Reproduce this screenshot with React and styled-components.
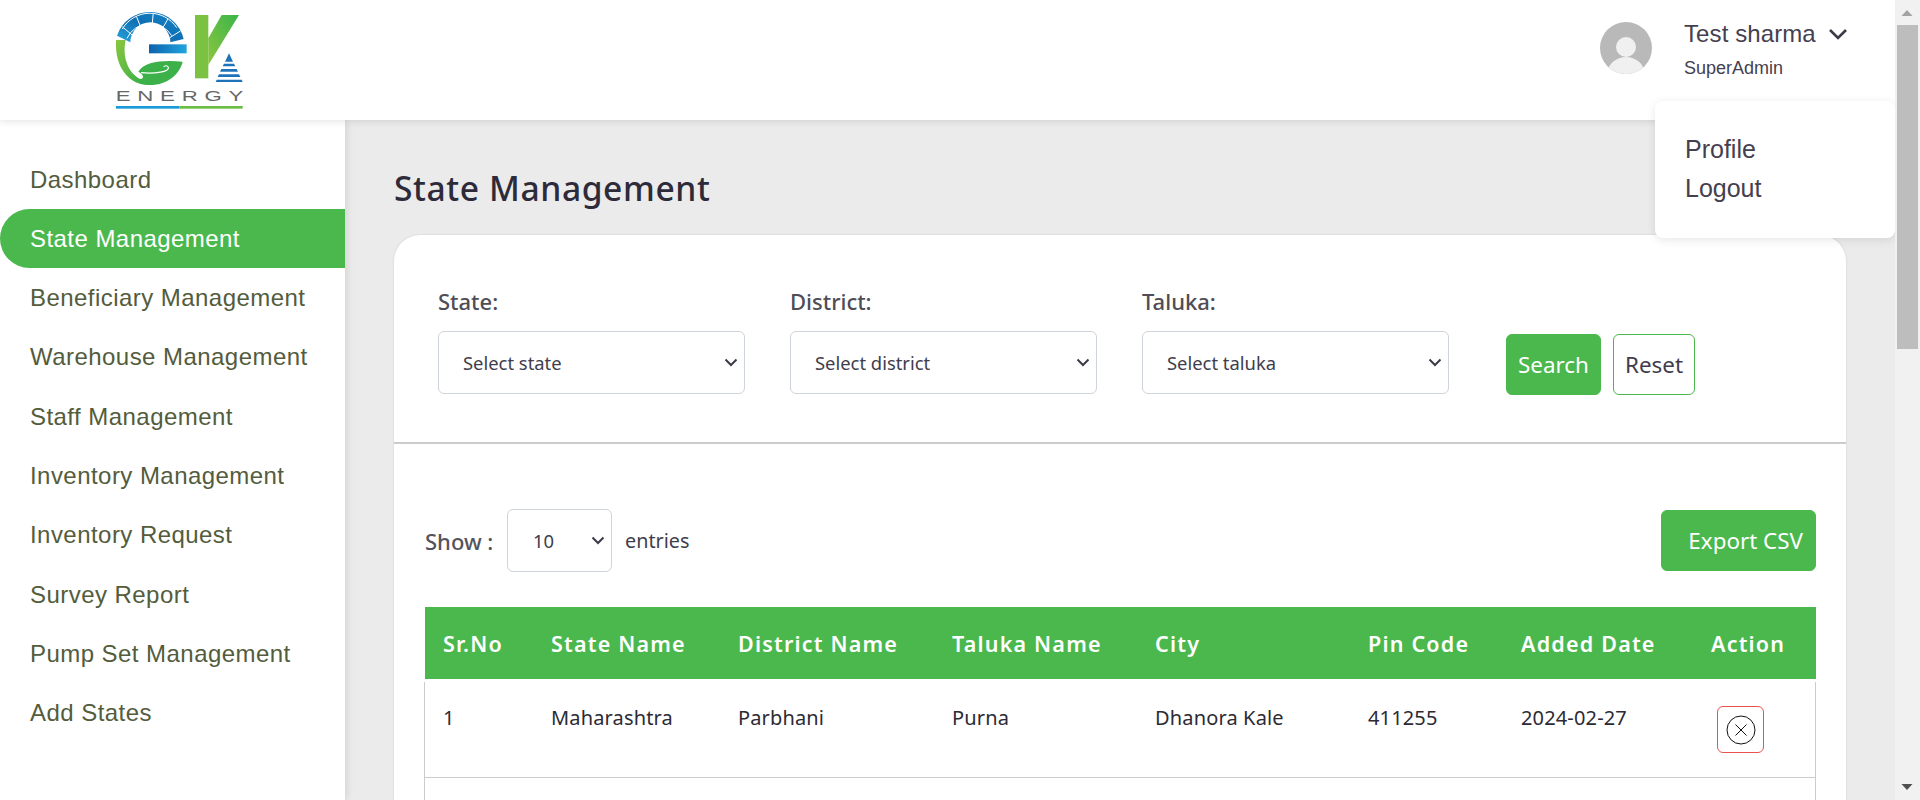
import React from 'react';
import styled, { createGlobalStyle } from 'styled-components';

const GREEN = '#4ab84c';
const chevron = encodeURIComponent(
  '<svg xmlns="http://www.w3.org/2000/svg" width="14" height="9" viewBox="0 0 14 9"><path d="M1.5 1.500 7 7l5.500-5.500" fill="none" stroke="#3c3a46" stroke-width="2"/></svg>'
);

const GlobalStyle = createGlobalStyle`
  html, body {
    height: 100%;
    overflow: hidden;
  }
  body {
    margin: 0;
    background: #ebebeb;
    font-family: "Noto Sans", "Open Sans", sans-serif;
  }
  * {
    box-sizing: border-box;
  }
`;

const Page = styled.div`
  display: flex;
  height: 100vh;
`;

const Content = styled.div`
  flex: 1;
  min-width: 0;
  height: 100vh;
  overflow: hidden;
`;

const ScrollRail = styled.div`
  flex: 0 0 25px;
  display: flex;
  flex-direction: column;
  align-items: center;
  background: #f1f1f1;
`;

const ScrollArrow = styled.svg`
  flex: 0 0 25px;
  width: 25px;
  height: 25px;
`;

const ScrollThumb = styled.div`
  width: 21px;
  height: 324px;
  margin-bottom: auto;
  background: #bdbdbd;
`;

const Header = styled.header`
  position: relative;
  z-index: 3;
  height: 120px;
  display: flex;
  justify-content: space-between;
  background: #fff;
  box-shadow: 0 1px 8px rgba(0, 0, 0, 0.12);
`;

const LogoBox = styled.div`
  padding: 5px 0 0 105px;
`;

const UserBox = styled.div`
  position: relative;
  display: flex;
  align-items: flex-start;
  padding: 22px 0 0 0;
  width: 295px;
`;

const Avatar = styled.svg`
  width: 52px;
  height: 52px;
  margin-right: 32px;
`;

const NameRow = styled.div`
  display: flex;
  align-items: center;
  gap: 12px;
  height: 22px;
  margin-top: 1px;
  font-family: "Liberation Sans", Arial, sans-serif;
  font-size: 24px;
  letter-spacing: 0.1px;
  color: #45404f;
`;

const Role = styled.div`
  margin-top: 13px;
  font-family: "Liberation Sans", Arial, sans-serif;
  font-size: 18px;
  color: #45404f;
`;

const Menu = styled.div`
  position: absolute;
  top: 101px;
  right: 0;
  width: 240px;
  height: 137px;
  padding: 29px 30px 0;
  background: #fff;
  border-radius: 8px;
  box-shadow: 0 2px 10px rgba(0, 0, 0, 0.1);
`;

const MenuItem = styled.div`
  height: 39px;
  line-height: 39px;
  font-family: "Liberation Sans", Arial, sans-serif;
  font-size: 25px;
  color: #45404f;
`;

const Layout = styled.div`
  display: flex;
  height: 680px;
`;

const Sidebar = styled.nav`
  flex: 0 0 345px;
  padding-top: 29.5px;
  background: #fff;
  box-shadow: 1px 0 8px rgba(0, 0, 0, 0.12);
  position: relative;
  z-index: 2;
`;

const NavItem = styled.div`
  height: 59.3px;
  line-height: 59.3px;
  padding-left: 30px;
  font-family: "Liberation Sans", Arial, sans-serif;
  font-size: 24px;
  letter-spacing: 0.45px;
  color: ${(p) => (p.$active ? '#fff' : '#535c3c')};
  background: ${(p) => (p.$active ? GREEN : 'transparent')};
  border-radius: 30px 0 0 30px;
`;

const Main = styled.main`
  flex: 1;
  min-width: 0;
  padding: 0 49px;
`;

const Title = styled.h1`
  margin: 0;
  height: 115px;
  padding-top: 46px;
  font-size: 33.6px;
  line-height: 44px;
  font-weight: 500;
  letter-spacing: 0.6px;
  color: #2d2a3a;
`;

const Card = styled.section`
  background: #fff;
  border-radius: 26px 26px 0 0;
  box-shadow: 0 0 2px rgba(0, 0, 0, 0.15);
`;

const Filters = styled.div`
  display: flex;
  align-items: flex-start;
  height: 209px;
  padding: 52px 44px 0;
  border-bottom: 2px solid #ccc;
`;

const Field = styled.label`
  display: block;
  width: 307px;
  margin-right: 45px;
`;

const FieldLabel = styled.div`
  height: 44px;
  font-size: 22px;
  line-height: 28px;
  font-weight: 500;
  color: #4f4d55;
`;

const Select = styled.select`
  display: block;
  width: ${(p) => p.$width || '100%'};
  height: 63px;
  padding: 0 0 0 ${(p) => p.$pad || '24px'};
  font-family: inherit;
  font-size: 18.4px;
  color: #413d4c;
  background: #fff url("data:image/svg+xml,${chevron}") no-repeat right 6px center;
  border: 1px solid #ced4da;
  border-radius: 6px;
  appearance: none;
`;

const Buttons = styled.div`
  display: flex;
  gap: 12px;
  margin: 47px 0 0 12px;
`;

const Button = styled.button`
  height: 61px;
  padding: 0;
  width: ${(p) => p.$width};
  font-family: inherit;
  font-size: 22.4px;
  color: ${(p) => (p.$outline ? '#413d4c' : '#fff')};
  background: ${(p) => (p.$outline ? '#fff' : GREEN)};
  border: 1px solid ${GREEN};
  border-radius: 6px;
`;

const ExportButton = styled(Button)`
  text-align: right;
  padding-right: 12px;
`;

const TableArea = styled.div`
  padding: 65px 30px 0 31px;
`;

const Toolbar = styled.div`
  display: flex;
  justify-content: space-between;
  align-items: center;
  margin-bottom: 35px;
`;

const ShowGroup = styled.div`
  display: flex;
  align-items: center;
  font-size: 19.8px;
  color: #413d4c;
`;

const ShowLabel = styled.span`
  width: 82px;
  font-size: 22px;
  font-weight: 500;
  color: #55535a;
`;

const Entries = styled.span`
  margin-left: 13px;
`;

const TableHead = styled.div`
  display: grid;
  grid-template-columns: 108px 187px 214px 203px 213px 153px 190px 1fr;
  height: 72px;
  align-items: center;
  background: ${GREEN};
`;

const HeadCell = styled.div`
  padding-left: 18px;
  font-size: 21.5px;
  font-weight: 600;
  letter-spacing: 1.2px;
  color: #fff;
  white-space: nowrap;
`;

const TableBody = styled.div`
  margin: 3px 0 0 -1px;
  min-height: 200px;
  border-left: 1px solid #ccc;
  border-right: 1px solid #ccc;
`;

const Row = styled.div`
  display: grid;
  grid-template-columns: 108px 187px 214px 203px 213px 153px 190px 1fr;
  height: 96px;
  border-bottom: 1px solid #ccc;
`;

const Cell = styled.div`
  padding: 21px 0 0 18px;
  font-size: 20px;
  letter-spacing: 0.15px;
  line-height: 30px;
  color: #2c2a35;
  white-space: nowrap;
`;

const ActionCell = styled.div`
  padding: 24px 0 0 24px;
`;

const IconButton = styled.button`
  display: flex;
  align-items: center;
  justify-content: center;
  width: 47px;
  height: 47px;
  padding: 0;
  background: #fff;
  border: 1px solid #e8524f;
  border-radius: 6px;
`;

const navItems = [
  'Dashboard',
  'State Management',
  'Beneficiary Management',
  'Warehouse Management',
  'Staff Management',
  'Inventory Management',
  'Inventory Request',
  'Survey Report',
  'Pump Set Management',
  'Add States',
];

const columns = ['Sr.No', 'State Name', 'District Name', 'Taluka Name', 'City', 'Pin Code', 'Added Date', 'Action'];
const row = ['1', 'Maharashtra', 'Parbhani', 'Purna', 'Dhanora Kale', '411255', '2024-02-27'];

// point on the solar arc, centred on the G
const polar = (r, deg) => {
  const a = (deg * Math.PI) / 180;
  return [135 + r * Math.cos(a), 135 - r * Math.sin(a)];
};

const Logo = () => {
  const spokes = [168, 140, 112, 85, 60, 32];
  return (
    <svg width="145" height="110" viewBox="0 0 435 330">
      <defs>
        <linearGradient id="arc" x1="0" y1="1" x2="1" y2="0">
          <stop offset="0" stopColor="#27a4dc" />
          <stop offset="0.5" stopColor="#0f6fb4" />
          <stop offset="1" stopColor="#1689c9" />
        </linearGradient>
        <linearGradient id="bar" x1="0" y1="0" x2="1" y2="0">
          <stop offset="0" stopColor="#0d62ad" />
          <stop offset="1" stopColor="#21a5de" />
        </linearGradient>
        <linearGradient id="arm" x1="0" y1="1" x2="1" y2="0">
          <stop offset="0" stopColor="#8cc63f" />
          <stop offset="1" stopColor="#39b54a" />
        </linearGradient>
        <linearGradient id="gee" x1="0" y1="0" x2="1" y2="1">
          <stop offset="0" stopColor="#8cc63f" />
          <stop offset="1" stopColor="#2fae4a" />
        </linearGradient>
      </defs>
      <path d="M36 92A104 104 0 0 1 236 102L196 112A60 60 0 0 0 76 112Z" fill="url(#arc)" />
      <path d="M52 72A96 96 0 0 1 215 68M66 100A76 76 0 0 1 200 92" fill="none" stroke="#fff" strokeWidth="3" />
      {spokes.map((d) => {
        const [x1, y1] = polar(60, d);
        const [x2, y2] = polar(108, d);
        return <line key={d} x1={x1} y1={y1} x2={x2} y2={y2} stroke="#fff" strokeWidth="3" />;
      })}
      <path d="M33 105H62C52 150 65 200 105 222L130 240C75 240 28 190 33 105Z" fill="url(#gee)" />
      <path d="M100 200C120 170 170 165 233 170C225 205 190 240 135 240C118 240 100 232 105 222C120 222 115 207 100 200Z" fill="#3cb14a" />
      <path d="M108 203C150 207 195 200 190 187C187 180 178 182 176 186" fill="none" stroke="#fff" strokeWidth="3.500" />
      <rect x="132" y="118" width="113" height="27" fill="url(#bar)" />
      <rect x="270" y="30" width="40" height="190" fill="#7cc242" />
      <path d="M310 100 350 30H402L310 180Z" fill="url(#arm)" />
      <path d="M372 145 384 170H360Z" fill="#1f72b8" />
      <path d="M357 176H387L391 184H353Z" fill="#1f72b8" />
      <path d="M349 192H395L399 200H345Z" fill="#1f72b8" />
      <path d="M342 208H402L406 216H338Z" fill="#1f72b8" />
      <path d="M335 224H410L413 231H332Z" fill="#1f72b8" />
      <text transform="translate(32 288) scale(1.45 1)" fontFamily="Liberation Sans, sans-serif" fontSize="46" letterSpacing="14" fill="#666">ENERGY</text>
      <rect x="33" y="303" width="190" height="8" fill="#1a9ad6" />
      <rect x="223" y="303" width="190" height="8" fill="#6cbb45" />
    </svg>
  );
};

const App = () => (
  <Page>
    <GlobalStyle />
    <Content>
      <Header>
        <LogoBox>
          <Logo />
        </LogoBox>
        <UserBox>
          <Avatar viewBox="0 0 52 52">
            <clipPath id="avatar-clip">
              <circle cx="26" cy="26" r="26" />
            </clipPath>
            <g clipPath="url(#avatar-clip)">
              <rect width="52" height="52" fill="#b9b9b9" />
              <circle cx="26" cy="25" r="10" fill="#f0f0f0" />
              <ellipse cx="26" cy="50" rx="18" ry="15" fill="#f0f0f0" />
            </g>
          </Avatar>
          <div>
            <NameRow>
              Test sharma
              <svg width="20" height="12" viewBox="0 0 20 12">
                <path d="M2 2l8 8 8-8" fill="none" stroke="#3c3a46" strokeWidth="2.600" />
              </svg>
            </NameRow>
            <Role>SuperAdmin</Role>
          </div>
          <Menu>
            <MenuItem>Profile</MenuItem>
            <MenuItem>Logout</MenuItem>
          </Menu>
        </UserBox>
      </Header>
      <Layout>
        <Sidebar>
          {navItems.map((item) => (
            <NavItem key={item} $active={item === 'State Management'}>{item}</NavItem>
          ))}
        </Sidebar>
        <Main>
          <Title>State Management</Title>
          <Card>
            <Filters>
              <Field>
                <FieldLabel>State:</FieldLabel>
                <Select><option>Select state</option></Select>
              </Field>
              <Field>
                <FieldLabel>District:</FieldLabel>
                <Select><option>Select district</option></Select>
              </Field>
              <Field>
                <FieldLabel>Taluka:</FieldLabel>
                <Select><option>Select taluka</option></Select>
              </Field>
              <Buttons>
                <Button $width="95px">Search</Button>
                <Button $width="82px" $outline>Reset</Button>
              </Buttons>
            </Filters>
            <TableArea>
              <Toolbar>
                <ShowGroup>
                  <ShowLabel>Show :</ShowLabel>
                  <Select $width="105px" $pad="25px"><option>10</option></Select>
                  <Entries>entries</Entries>
                </ShowGroup>
                <ExportButton $width="155px">Export CSV</ExportButton>
              </Toolbar>
              <TableHead>
                {columns.map((c) => <HeadCell key={c}>{c}</HeadCell>)}
              </TableHead>
              <TableBody>
                <Row>
                  {row.map((c) => <Cell key={c}>{c}</Cell>)}
                  <ActionCell>
                    <IconButton aria-label="Delete">
                      <svg width="30" height="30" viewBox="0 0 30 30">
                        <circle cx="15" cy="15" r="14" fill="none" stroke="#111" strokeWidth="1" />
                        <path d="M9.500 9.500l11 11M20.500 9.500l-11 11" fill="none" stroke="#111" strokeWidth="1" />
                      </svg>
                    </IconButton>
                  </ActionCell>
                </Row>
              </TableBody>
            </TableArea>
          </Card>
        </Main>
      </Layout>
    </Content>
    <ScrollRail>
      <ScrollArrow viewBox="0 0 25 25">
        <path d="M12 10 6.500 16h11z" fill="#a3a3a3" />
      </ScrollArrow>
      <ScrollThumb />
      <ScrollArrow viewBox="0 0 25 25">
        <path d="M12 15 6.500 9h11z" fill="#505050" />
      </ScrollArrow>
    </ScrollRail>
  </Page>
);

export default App;
